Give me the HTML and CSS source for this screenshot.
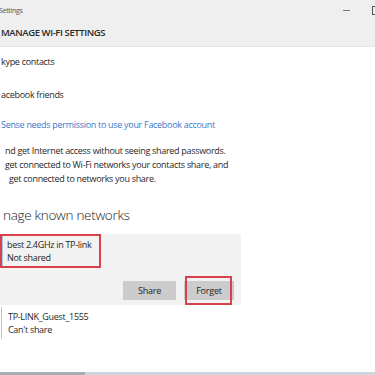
FILE: index.html
```html
<!DOCTYPE html>
<html lang="en">
	<head>
		<meta charset="UTF-8">
		<meta name="viewport" content="width=device-width, initial-scale=1">
		<link rel="stylesheet" href="styles.css">
	</head>

	<body>
		<div class="titleBar">
			<span class="titleText">Settings</span>
			<span class="windowButtons">
				<span class="minimize"></span>
				<span class="maximize"></span>
			</span>
		</div>

		<div class="header">MANAGE WI-FI SETTINGS</div>

		<div class="content">
			<div class="option optionFirst">kype contacts</div>
			<div class="option">acebook friends</div>
			<div class="option link">Sense needs permission to use your Facebook account</div>

			<div class="description">
				<div class="line lineOne">nd get Internet access without seeing shared passwords.</div>
				<div class="line lineTwo">get connected to Wi-Fi networks your contacts share, and</div>
				<div class="line lineThree">get connected to networks you share.</div>
			</div>

			<div class="sectionTitle">nage known networks</div>

			<div class="networkSelected">
				<div class="networkItem highlight">
					<div class="networkName">best 2.4GHz in TP-link</div>
					<div class="networkState">Not shared</div>
				</div>
				<div class="networkButtons">
					<button class="buttonGray">Share</button>
					<span class="forgetWrap">
						<button class="buttonGray buttonForget">Forget</button>
						<span class="markBox"></span>
					</span>
				</div>
			</div>

			<div class="networkItem">
				<div class="networkName">TP-LINK_Guest_1555</div>
				<div class="networkState">Can't share</div>
			</div>
		</div>

		<div class="taskBar">
			<span class="taskActive"></span>
		</div>
	</body>
</html>
```

FILE: styles.css
```css
html, body {
	margin: 0;
	padding: 0;
}

body {
	width: 375px;
	height: 375px;
	overflow: hidden;
	background-color: #ffffff;
	font-family: "Open Sans", "Noto Sans", sans-serif;
	font-size: 9px;
	letter-spacing: -0.3px;
	color: #1f1f1f;
	display: flex;
	flex-direction: column;
}

/*---------------------------TITLE---------------------------*/
.titleBar {
	height: 20px;
	background-color: #efefef;
	display: flex;
	align-items: center;
	justify-content: space-between;
}

.titleText {
	font-size: 7px;
	color: #555555;
	margin-left: -1px;
}

.windowButtons {
	display: flex;
	align-items: center;
	gap: 22px;
	margin-right: -6px;
}

.minimize {
	width: 7px;
	height: 1px;
	background-color: #777777;
}

.maximize {
	width: 7px;
	height: 7px;
	border: 1px solid #555555;
}

.header {
	height: 26px;
	line-height: 26px;
	background-color: #efefef;
	border-bottom: 1px solid #e4e4e4;
	font-size: 9.5px;
	font-weight: 600;
	letter-spacing: -0.4px;
	color: #2a2a2a;
	padding-left: 1px;
}

/*---------------------------CONTENT---------------------------*/
.content {
	flex: 1;
}

.option {
	line-height: 14px;
	margin-top: 19px;
	padding-left: 1px;
}

.optionFirst {
	margin-top: 8px;
}

.link {
	margin-top: 16px;
	color: #3b78c8;
}

.description {
	margin-top: 12px;
	line-height: 14px;
}

.lineOne {
	padding-left: 5px;
}

.lineTwo {
	padding-left: 5px;
}

.lineThree {
	padding-left: 9px;
}

.sectionTitle {
	margin-top: 19px;
	line-height: 20px;
	font-size: 13.5px;
	font-weight: 300;
	letter-spacing: -0.3px;
	color: #1c1c1c;
	padding-left: 3px;
}

.networkSelected {
	margin-top: 9px;
	width: 241px;
	height: 71px;
	background-color: #f2f2f2;
}

.networkItem {
	padding: 3px 0 3px 6px;
	line-height: 13px;
	border-left: 1px solid #a9c6e4;
	margin-left: 1px;
	width: 92px;
}

.networkSelected .networkItem {
	margin-left: 0;
	padding: 2px 0 2px 5px;
}

.highlight {
	border: 2px solid #d8424c;
	box-shadow: inset 1px 0 0 #a9c6e4;
	width: 92px;
}

.networkButtons {
	display: flex;
	gap: 8px;
	margin-top: 13px;
	padding-left: 123px;
}

.buttonGray {
	background-color: #cccccc;
	border: none;
	color: #1f1f1f;
	font-family: "Open Sans", "Noto Sans", sans-serif;
	font-size: 9px;
	letter-spacing: -0.2px;
	height: 19px;
	padding: 0;
	width: 53px;
}

.buttonForget {
	width: 50px;
}

.forgetWrap {
	position: relative;
	display: inline-block;
}

.markBox {
	position: absolute;
	left: 1px;
	top: -5px;
	width: 43px;
	height: 25px;
	border: 2px solid #d8424c;
}

.networkSelected + .networkItem {
	margin-top: 2px;
}

/*---------------------------TASKBAR---------------------------*/
.taskBar {
	height: 3px;
	background-color: #cfd5de;
	display: flex;
}

.taskActive {
	width: 85px;
	background-color: #a8adb5;
}
```
